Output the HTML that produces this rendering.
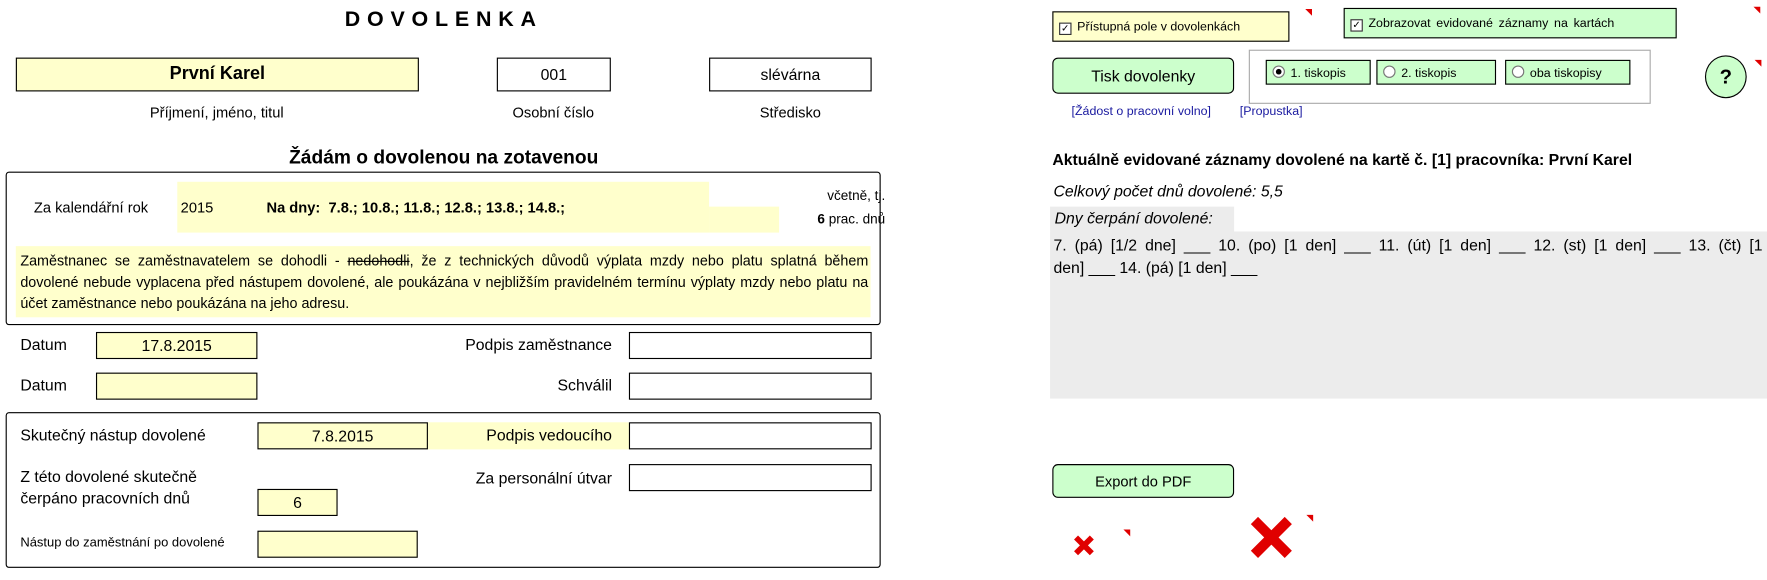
<!DOCTYPE html>
<html><head><meta charset="utf-8"><style>
html,body{margin:0;padding:0;background:#fff;width:1767px;height:580px;overflow:hidden}
#w{position:absolute;left:0;top:0;width:1565px;height:514px;transform:scale(1.1291);transform-origin:0 0;font-family:"Liberation Sans",Arial,sans-serif;color:#000}
.a{position:absolute;white-space:nowrap}
.b{position:absolute;box-sizing:border-box;border:1px solid #000}
.y{background:#ffffcc}
.g{background:#ccffcc}
.c{display:flex;align-items:center;justify-content:center}
.r{text-align:right}
.f13{font-size:13px}
.mk{position:absolute;width:0;height:0;border-top:6px solid #e00000;border-left:6px solid transparent}
.cb{display:inline-block;width:9px;height:9px;border:1px solid #333;background:#fff;font-size:9px;line-height:9px;text-align:center;margin-right:5px;vertical-align:-1px}
.rd{display:inline-block;width:9px;height:9px;border:1px solid #777;border-radius:50%;background:#fff;margin-right:5px;vertical-align:-1px;position:relative}
.rd.on:after{content:"";position:absolute;left:2px;top:2px;width:5px;height:5px;border-radius:50%;background:#000}
</style></head><body><div id="w">

<div class="a" style="left:300px;top:7px;width:186px;text-align:center;font-weight:bold;font-size:19px;letter-spacing:6px">DOVOLENKA</div>

<div class="b y c" style="left:14px;top:51px;width:357px;height:30px;font-weight:bold;font-size:16px">První Karel</div>
<div class="b c" style="left:440px;top:51px;width:101px;height:30px;font-size:14px">001</div>
<div class="b c" style="left:628px;top:51px;width:144px;height:30px;font-size:14px">slévárna</div>
<div class="a f13" style="left:92px;top:92px;width:200px;text-align:center">Příjmení, jméno, titul</div>
<div class="a f13" style="left:420px;top:92px;width:140px;text-align:center">Osobní číslo</div>
<div class="a f13" style="left:630px;top:92px;width:140px;text-align:center">Středisko</div>

<div class="a" style="left:190px;top:130px;width:406px;text-align:center;font-weight:bold;font-size:17px">Žádám o dovolenou na zotavenou</div>

<div class="b" style="left:5px;top:152px;width:775px;height:136px;border-radius:3px"></div>
<div class="a y" style="left:157px;top:161px;width:471px;height:45px"></div>
<div class="a y" style="left:628px;top:183px;width:62px;height:23px"></div>
<div class="a f13" style="left:30px;top:176px">Za kalendářní rok</div>
<div class="a f13" style="left:160px;top:176px">2015</div>
<div class="a f13" style="left:236px;top:176px;font-weight:bold">Na dny:&nbsp; 7.8.; 10.8.; 11.8.; 12.8.; 13.8.; 14.8.;</div>
<div class="a r" style="left:650px;top:166px;width:134px;font-size:12px">včetně, tj.</div>
<div class="a r" style="left:650px;top:187px;width:134px;font-size:12px"><b>6</b> prac. dnů</div>
<div class="a y" style="left:14px;top:218px;width:757px;height:63px"></div>
<div style="position:absolute;left:18px;top:222px;width:751px;font-size:12.7px;line-height:19px;text-align:justify;text-align-last:left">Zaměstnanec se zaměstnavatelem se dohodli - <s>nedohodli</s>, že z technických důvodů výplata mzdy nebo platu splatná během dovolené nebude vyplacena před nástupem dovolené, ale poukázána v nejbližším pravidelném termínu výplaty mzdy nebo platu na účet zaměstnance nebo poukázána na jeho adresu.</div>

<div class="a" style="left:18px;top:297px;font-size:14px">Datum</div>
<div class="b y c" style="left:85px;top:294px;width:143px;height:24px;font-size:14px">17.8.2015</div>
<div class="a r" style="left:340px;top:297px;width:202px;font-size:14px">Podpis zaměstnance</div>
<div class="b" style="left:557px;top:294px;width:215px;height:24px"></div>
<div class="a" style="left:18px;top:333px;font-size:14px">Datum</div>
<div class="b y" style="left:85px;top:330px;width:143px;height:24px"></div>
<div class="a r" style="left:340px;top:333px;width:202px;font-size:14px">Schválil</div>
<div class="b" style="left:557px;top:330px;width:215px;height:24px"></div>

<div class="b" style="left:5px;top:365px;width:775px;height:138px;border-radius:3px"></div>
<div class="a" style="left:18px;top:377px;font-size:14px">Skutečný nástup dovolené</div>
<div class="a y" style="left:378px;top:374px;width:179px;height:24px"></div>
<div class="b y c" style="left:228px;top:374px;width:151px;height:24px;font-size:14px">7.8.2015</div>
<div class="a r" style="left:340px;top:377px;width:202px;font-size:14px">Podpis vedoucího</div>
<div class="b" style="left:557px;top:374px;width:215px;height:24px"></div>
<div class="a" style="left:18px;top:414px;font-size:14px">Z této dovolené skutečně</div>
<div class="a" style="left:18px;top:433px;font-size:14px">čerpáno pracovních dnů</div>
<div class="b y c" style="left:228px;top:433px;width:71px;height:24px;font-size:14px">6</div>
<div class="a r" style="left:340px;top:415px;width:202px;font-size:14px">Za personální útvar</div>
<div class="b" style="left:557px;top:411px;width:215px;height:24px"></div>
<div class="a" style="left:18px;top:475px;font-size:11.5px">Nástup do zaměstnání po dovolené</div>
<div class="b y" style="left:228px;top:470px;width:142px;height:24px"></div>

<!-- right -->
<div class="b y" style="left:932px;top:10px;width:210px;height:27px;font-size:11px;padding:7px 0 0 5px"><span class="cb">✓</span>Přístupná pole v dovolenkách</div>
<div class="mk" style="left:1156px;top:8px"></div>
<div class="b g" style="left:1190px;top:7px;width:295px;height:27px;font-size:11px;padding:7px 0 0 5px;word-spacing:2px"><span class="cb">✓</span>Zobrazovat evidované záznamy na kartách</div>
<div class="mk" style="left:1553px;top:6px"></div>

<div class="b g c" style="left:932px;top:51px;width:161px;height:32px;border-radius:5px;font-size:14px">Tisk dovolenky</div>
<div class="a" style="left:1106px;top:44px;width:356px;height:48px;box-sizing:border-box;border:1px solid #aaa"></div>
<div class="b g" style="left:1121px;top:53px;width:93px;height:22px;font-size:11px;padding:4px 0 0 5px"><span class="rd on"></span>1. tiskopis</div>
<div class="b g" style="left:1219px;top:53px;width:106px;height:22px;font-size:11px;padding:4px 0 0 5px"><span class="rd"></span>2. tiskopis</div>
<div class="b g" style="left:1333px;top:53px;width:111px;height:22px;font-size:11px;padding:4px 0 0 5px"><span class="rd"></span>oba tiskopisy</div>
<div class="b g c" style="left:1510px;top:49px;width:37px;height:38px;border-radius:50%;font-weight:bold;font-size:18px">?</div>
<div class="mk" style="left:1554px;top:53px"></div>
<div class="a" style="left:949px;top:93px;font-size:11px;color:#1a1aa0">[Žádost o pracovní volno]</div>
<div class="a" style="left:1098px;top:93px;font-size:11px;color:#1a1aa0">[Propustka]</div>

<div class="a" style="left:932px;top:133px;font-size:14px;font-weight:bold">Aktuálně evidované záznamy dovolené na kartě č. [1] pracovníka: První Karel</div>
<div class="a" style="left:933px;top:161px;font-size:14px;font-style:italic">Celkový počet dnů dovolené: 5,5</div>
<div class="a" style="left:930px;top:183px;width:163px;height:22px;background:#ececec"></div>
<div class="a" style="left:930px;top:205px;width:635px;height:148px;background:#ececec"></div>
<div class="a" style="left:934px;top:185px;font-size:14px;font-style:italic">Dny čerpání dovolené:</div>
<div style="position:absolute;left:933px;top:207px;width:628px;font-size:14px;line-height:20px;text-align:justify;text-align-last:justify">7. (pá) [1/2 dne] ___ 10. (po) [1 den] ___ 11. (út) [1 den] ___ 12. (st) [1 den] ___ 13. (čt) [1</div>
<div class="a" style="left:933px;top:227px;font-size:14px;line-height:20px">den] ___ 14. (pá) [1 den] ___</div>

<div class="b g c" style="left:932px;top:411px;width:161px;height:30px;border-radius:5px;font-size:13px">Export do PDF</div>

<svg style="position:absolute;left:950px;top:473px" width="20" height="20" viewBox="0 0 20 20"><path d="M3 3L17 17M17 3L3 17" stroke="#e00000" stroke-width="5"/></svg>
<div class="mk" style="left:995px;top:469px"></div>
<svg style="position:absolute;left:1106px;top:456px" width="40" height="40" viewBox="0 0 40 40"><path d="M5 5L35 35M35 5L5 35" stroke="#e00000" stroke-width="9"/></svg>
<div class="mk" style="left:1157px;top:456px"></div>

</div></body></html>
